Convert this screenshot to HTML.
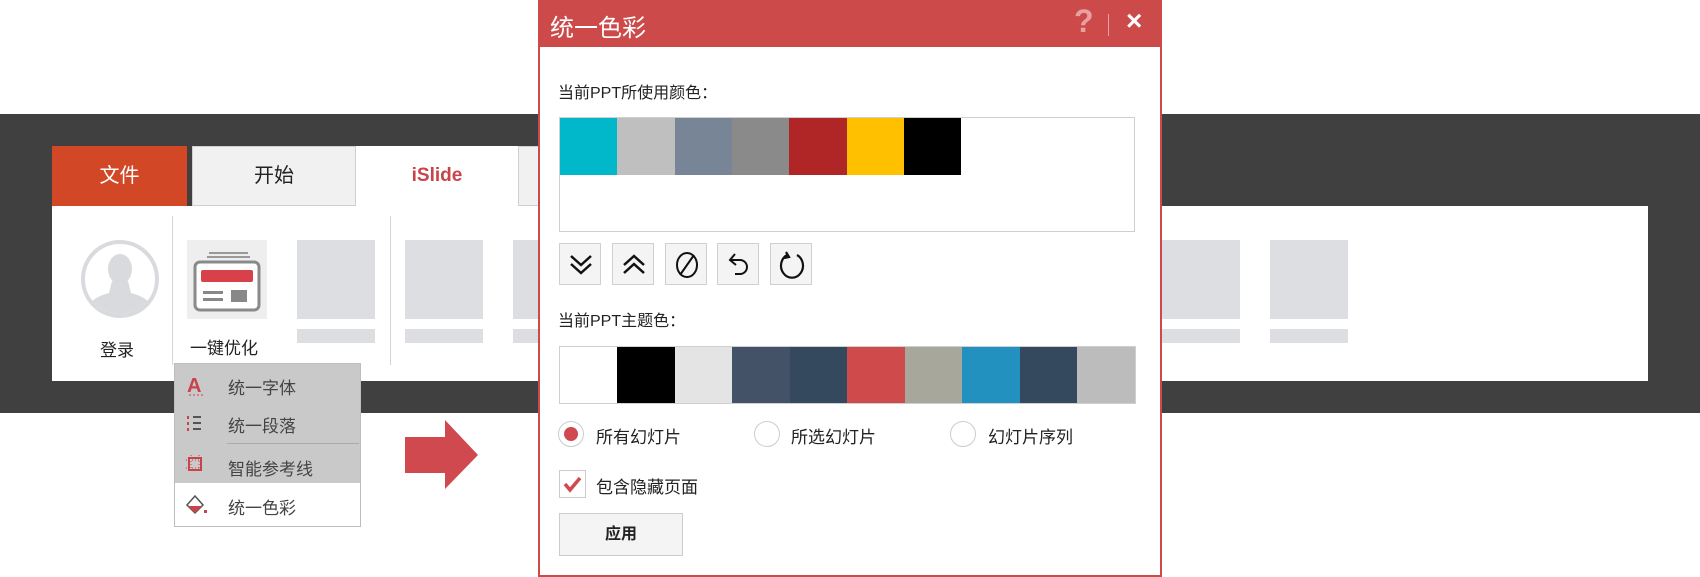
<!DOCTYPE html>
<html><head><meta charset="utf-8"><style>
*{margin:0;padding:0;box-sizing:border-box}
body{width:1700px;height:577px;background:#fff;position:relative;overflow:hidden;font-family:"Liberation Sans","Noto Sans CJK SC",sans-serif;color:#222}
.a{position:absolute}
.ph{position:absolute;background:#dcdee1}
.sw{position:absolute;height:100%;top:0}
.btn{position:absolute;top:243px;width:42px;height:42px;border:1px solid #cfcfcf;background:#f4f4f4}
.btn svg{position:absolute;left:6px;top:6px}
.mi{position:absolute;left:228px;font-size:17px;color:#444}
</style></head><body>
<div class="a" style="left:0;top:114px;width:1700px;height:299px;background:#404040"></div>
<div class="a" style="left:52px;top:146px;width:135px;height:60px;background:#d24726;color:#fff;font-size:20px;text-align:center;line-height:60px">文件</div>
<div class="a" style="left:192px;top:146px;width:164px;height:60px;background:#f1f1f1;border:1px solid #d0d0d0;font-size:20px;text-align:center;line-height:58px">开始</div>
<div class="a" style="left:356px;top:146px;width:162px;height:60px;background:#fff;color:#c9434a;font-weight:bold;font-size:19px;text-align:center;line-height:60px">iSlide</div>
<div class="a" style="left:518px;top:146px;width:30px;height:60px;background:#f1f1f1;border:1px solid #d0d0d0"></div>
<div class="a" style="left:52px;top:206px;width:1596px;height:175px;background:#fff"></div>
<svg class="a" style="left:80px;top:239px" width="80" height="80"><defs><clipPath id="c"><circle cx="40" cy="40" r="35"/></clipPath></defs><circle cx="40" cy="40" r="37" fill="#fff" stroke="#d8dadd" stroke-width="4"/><g clip-path="url(#c)" fill="#d8dadd"><ellipse cx="40" cy="30" rx="12" ry="15"/><path d="M32 42 L48 42 L51 54 Q68 58 74 70 L74 90 L6 90 L6 70 Q12 58 29 54 Z"/></g></svg>
<div class="a" style="left:100px;top:336px;font-size:17px">登录</div>
<div class="a" style="left:172px;top:216px;width:1px;height:149px;background:#d6d6d6"></div>
<div class="a" style="left:187px;top:240px;width:80px;height:79px;background:#eeeeee"></div>
<svg class="a" style="left:187px;top:240px" width="80" height="79"><path d="M22 13H61M20 17H63" stroke="#999" stroke-width="2"/><rect x="8" y="22" width="64" height="48" rx="5" fill="#fff" stroke="#8a8a8a" stroke-width="3"/><rect x="14" y="30" width="52" height="12" rx="2" fill="#d9414a"/><rect x="16" y="51" width="20" height="3" fill="#888"/><rect x="16" y="58" width="20" height="3" fill="#888"/><rect x="44" y="50" width="16" height="12" fill="#888"/></svg>
<div class="a" style="left:190px;top:334px;font-size:17px">一键优化</div>
<div class="ph" style="left:297px;top:240px;width:78px;height:79px"></div><div class="ph" style="left:297px;top:329px;width:78px;height:14px"></div>
<div class="a" style="left:390px;top:216px;width:1px;height:149px;background:#d6d6d6"></div>
<div class="ph" style="left:405px;top:240px;width:78px;height:79px"></div><div class="ph" style="left:405px;top:329px;width:78px;height:14px"></div>
<div class="ph" style="left:513px;top:240px;width:30px;height:79px"></div><div class="ph" style="left:513px;top:329px;width:30px;height:14px"></div>
<div class="ph" style="left:1162px;top:240px;width:78px;height:79px"></div><div class="ph" style="left:1162px;top:329px;width:78px;height:14px"></div>
<div class="ph" style="left:1270px;top:240px;width:78px;height:79px"></div><div class="ph" style="left:1270px;top:329px;width:78px;height:14px"></div>
<!-- dropdown -->
<div class="a" style="left:174px;top:363px;width:187px;height:164px;background:#fff;border:1px solid #bdbdbd"></div>
<div class="a" style="left:175px;top:364px;width:185px;height:119px;background:#c9c9c9"></div>
<div class="a" style="left:227px;top:443px;width:132px;height:1px;background:#aaa"></div>
<svg class="a" style="left:185px;top:372px" width="24" height="150"><text x="2" y="20" font-family="Liberation Sans" font-weight="bold" font-size="20" fill="#c9434a">A</text><path d="M4 23h14" stroke="#c9434a" stroke-dasharray="2 2"/>
<g fill="#c9434a"><rect x="2" y="44" width="2" height="3"/><rect x="2" y="50" width="2" height="3"/><rect x="2" y="56" width="2" height="3"/></g><g fill="#555"><rect x="8" y="44" width="8" height="2"/><rect x="8" y="50" width="8" height="2"/><rect x="8" y="56" width="8" height="2"/></g>
<rect x="4" y="86" width="12" height="12" fill="none" stroke="#c9434a" stroke-width="2"/><path d="M1 88h18M1 96h18M6 83v18M14 83v18" stroke="#c9434a" stroke-dasharray="1 2"/>
<path d="M2 133 L10 124 L18 133 L10 141 Z" fill="#fff" stroke="#555" stroke-width="1.5"/><path d="M3 134 L17 134 L10 141 Z" fill="#c9434a"/><rect x="19" y="138" width="3" height="3" fill="#c9434a"/></svg>
<div class="mi" style="top:374px">统一字体</div>
<div class="mi" style="top:412px">统一段落</div>
<div class="mi" style="top:455px">智能参考线</div>
<div class="mi" style="top:494px">统一色彩</div>
<svg class="a" style="left:405px;top:420px" width="75" height="70"><path d="M0 17H40V0L73 35L40 69V53H0Z" fill="#d0494e"/></svg>
<!-- dialog -->
<div class="a" style="left:538px;top:0;width:624px;height:577px;background:#fff;border:2px solid #cc4a4a"></div>
<div class="a" style="left:538px;top:0;width:624px;height:47px;background:#cc4a4a"></div>
<div class="a" style="left:550px;top:8px;font-size:24px;color:#fff">统一色彩</div>
<div class="a" style="left:1074px;top:3px;font-size:32px;color:#e9a0a0;font-weight:bold">?</div>
<div class="a" style="left:1108px;top:14px;width:1px;height:22px;background:#e9a0a0"></div>
<div class="a" style="left:1126px;top:5px;font-size:28px;color:#fff;font-weight:bold">×</div>
<div class="a" style="left:558px;top:79px;font-size:16px">当前PPT所使用颜色：</div>
<div class="a" style="left:559px;top:117px;width:576px;height:115px;border:1px solid #cfcfcf"></div>
<div class="a" style="left:560px;top:118px;width:400px;height:57px">
<div class="sw" style="left:0;width:57px;background:#00b8c9"></div><div class="sw" style="left:57px;width:58px;background:#bfbfbf"></div><div class="sw" style="left:115px;width:57px;background:#778597"></div><div class="sw" style="left:172px;width:57px;background:#8a8a8a"></div><div class="sw" style="left:229px;width:58px;background:#b02525"></div><div class="sw" style="left:287px;width:57px;background:#ffc000"></div><div class="sw" style="left:344px;width:57px;background:#000"></div></div>
<div class="btn" style="left:559px"><svg width="30" height="30" fill="none" stroke="#111" stroke-width="2.5"><path d="M5 6l10 9 10-9M5 14l10 9 10-9"/></svg></div>
<div class="btn" style="left:612px"><svg width="30" height="30" fill="none" stroke="#111" stroke-width="2.5"><path d="M5 15l10-9 10 9M5 23l10-9 10 9"/></svg></div>
<div class="btn" style="left:665px"><svg width="30" height="30" fill="none" stroke="#111" stroke-width="2"><ellipse cx="15" cy="15" rx="10" ry="12"/><path d="M8 25L22 5"/></svg></div>
<div class="btn" style="left:717px"><svg width="30" height="30" fill="none" stroke="#111" stroke-width="2"><path d="M11 4L6 10l6 5M6 10h10a7 7 0 0 1 0 14H11"/></svg></div>
<div class="btn" style="left:770px"><svg width="30" height="30" fill="none" stroke="#111" stroke-width="2.2"><path d="M10 5A11 12 0 1 0 20 5"/><path d="M9 2l3 5-5 1"/></svg></div>
<div class="a" style="left:558px;top:307px;font-size:16px">当前PPT主题色：</div>
<div class="a" style="left:559px;top:346px;width:577px;height:58px;border:1px solid #cfcfcf">
<div class="sw" style="left:0;width:57px;background:#fff"></div><div class="sw" style="left:57px;width:58px;background:#000"></div><div class="sw" style="left:115px;width:57px;background:#e5e4e5"></div><div class="sw" style="left:172px;width:58px;background:#435267"></div><div class="sw" style="left:230px;width:57px;background:#34495e"></div><div class="sw" style="left:287px;width:58px;background:#cf4b4b"></div><div class="sw" style="left:345px;width:57px;background:#a7a79b"></div><div class="sw" style="left:402px;width:58px;background:#2291c0"></div><div class="sw" style="left:460px;width:57px;background:#34495e"></div><div class="sw" style="left:517px;width:58px;background:#bcbcbc"></div></div>
<svg class="a" style="left:557px;top:420px" width="30" height="30"><circle cx="14" cy="14" r="12.5" fill="#fff" stroke="#ccc"/><circle cx="14" cy="14" r="7" fill="#d0494e"/></svg>
<div class="a" style="left:596px;top:423px;font-size:17px">所有幻灯片</div>
<svg class="a" style="left:753px;top:420px" width="30" height="30"><circle cx="14" cy="14" r="12.5" fill="#fff" stroke="#ccc"/></svg>
<div class="a" style="left:791px;top:423px;font-size:17px">所选幻灯片</div>
<svg class="a" style="left:949px;top:420px" width="30" height="30"><circle cx="14" cy="14" r="12.5" fill="#fff" stroke="#ccc"/></svg>
<div class="a" style="left:988px;top:423px;font-size:17px">幻灯片序列</div>
<div class="a" style="left:559px;top:470px;width:27px;height:28px;border:1px solid #ccc"></div>
<svg class="a" style="left:559px;top:470px" width="27" height="28"><path d="M6 14l5 6 10-12" fill="none" stroke="#d0494e" stroke-width="3.5"/></svg>
<div class="a" style="left:596px;top:473px;font-size:17px">包含隐藏页面</div>
<div class="a" style="left:559px;top:513px;width:124px;height:43px;border:1px solid #ccc;background:#f4f4f4;font-weight:bold;font-size:16px;text-align:center;line-height:41px">应用</div>
</body></html>
